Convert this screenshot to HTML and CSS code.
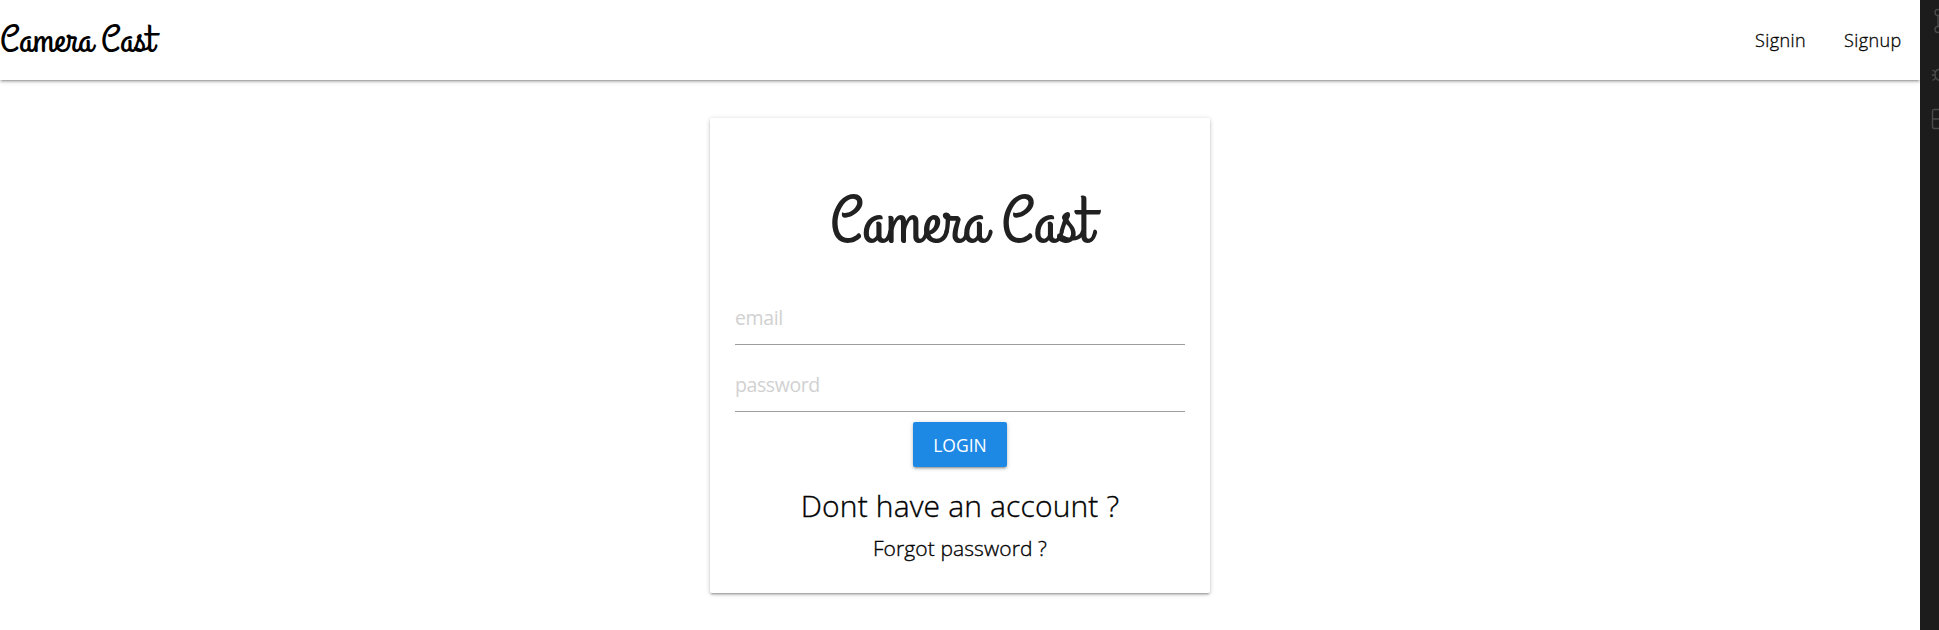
FILE: index.html
```html
<!DOCTYPE html>
<html lang="en">
<head>
<meta charset="utf-8">
<title>Camera Cast</title>
<link rel="stylesheet" href="styles.css">
</head>
<body>
<div class="page">
  <nav class="navbar">
    <a class="brand"><svg class="brand-mark" viewBox="0 0 170 80" role="img"><text x="0" y="51" textLength="154" lengthAdjust="spacingAndGlyphs">Camera Cast</text></svg></a>
    <div class="links"><a class="link signin">Signin</a><a class="link signup">Signup</a></div>
  </nav>
  <main class="card">
    <h2 class="title"><svg class="title-mark" viewBox="0 0 300 90" role="img"><text x="0" y="59" textLength="261" lengthAdjust="spacingAndGlyphs">Camera Cast</text></svg></h2>
    <form class="form">
      <input class="field email" type="text" placeholder="email">
      <input class="field password" type="password" placeholder="password">
      <button class="login" type="button">LOGIN</button>
    </form>
    <p class="account">Dont have an account ?</p>
    <p class="forgot">Forgot password ?</p>
  </main>
</div>
<aside class="rail">
  <svg class="rail-icons" viewBox="0 0 19 140">
    <circle cx="18" cy="12.5" r="3"/><path d="M18 16v10"/><circle cx="18" cy="29.5" r="3"/>
    <path d="M19 69.500h-1q-3 1-3 5t3 5.500h1M12.500 70l3 2M12 75h3M12.500 80.500l3-2"/>
    <path d="M19 109.500h-4.500q-2 0-2 2v15q0 2 2 2H19M12.500 119H19"/>
  </svg>
</aside>
</body>
</html>
```
FILE: styles.css
```css
* { box-sizing: border-box; }
body {
  margin: 0;
  display: flex;
  height: 630px;
  overflow: hidden;
  background: #fff;
  color: #000;
  font-family: "Segoe UI", "Open Sans", "Noto Sans", sans-serif;
}
.page { width: 1920px; flex: none; overflow: hidden; }
.navbar, .card, .login {
  box-shadow: 0 2px 2px 0 rgba(0,0,0,.14), 0 3px 1px -2px rgba(0,0,0,.12), 0 1px 5px 0 rgba(0,0,0,.2);
}
.navbar { height: 80px; display: flex; justify-content: space-between; }
.brand-mark { display: block; overflow: visible; width: 170px; height: 80px; font-size: 38px; }
.brand-mark text, .title-mark text {
  font-family: "Grand Hotel", cursive;
  font-weight: 400;
}
.links { display: flex; gap: 38px; padding-right: 18px; line-height: 80px; font-size: 18px; }
.link { font-weight: 300; white-space: nowrap; letter-spacing: .4px; -webkit-text-stroke: .3px #000; }
.signin { width: 51px; }
.signup { width: 58px; }
.card {
  width: 500px;
  height: 475px;
  margin: 38px auto 0;
  padding: 64px 25px 0;
  border-radius: 2px;
  text-align: center;
}
.title { margin: 0; padding-left: 95px; }
.title-mark { display: block; overflow: visible; width: 300px; height: 90px; font-size: 66px; fill: #212121; }
.form { display: flex; flex-direction: column; align-items: center; padding-top: 28px; }
.field {
  width: 450px;
  height: 45px;
  margin: 0 0 22px;
  padding: 0 0 10px;
  border: 0;
  border-bottom: 1px solid #9e9e9e;
  font: 400 19.5px "Segoe UI", "Open Sans", sans-serif;
  letter-spacing: -.4px;
  background: none;
}
.password { margin-bottom: 10px; }
.field::placeholder { color: #d1d1d1; opacity: 1; }
.login {
  width: 94px;
  height: 45px;
  padding: 0;
  border: 0;
  border-radius: 2px;
  background: #1e88e5;
  color: #fff;
  font: 400 17.5px "Segoe UI", "Open Sans", sans-serif;
}
.account, .forgot { font-weight: 300; -webkit-text-stroke: .35px #000; }
.account { margin: 17px 0 0; font-size: 30px; line-height: 44px; letter-spacing: .15px; }
.forgot { margin: 9px 0 0; font-size: 21px; line-height: 23px; letter-spacing: .1px; }
.rail { width: 19px; height: 630px; background: #1c1c1c; }
.rail-icons { display: block; width: 19px; height: 140px; fill: none; stroke: #4a4a4a; stroke-width: 1.4; }
```
